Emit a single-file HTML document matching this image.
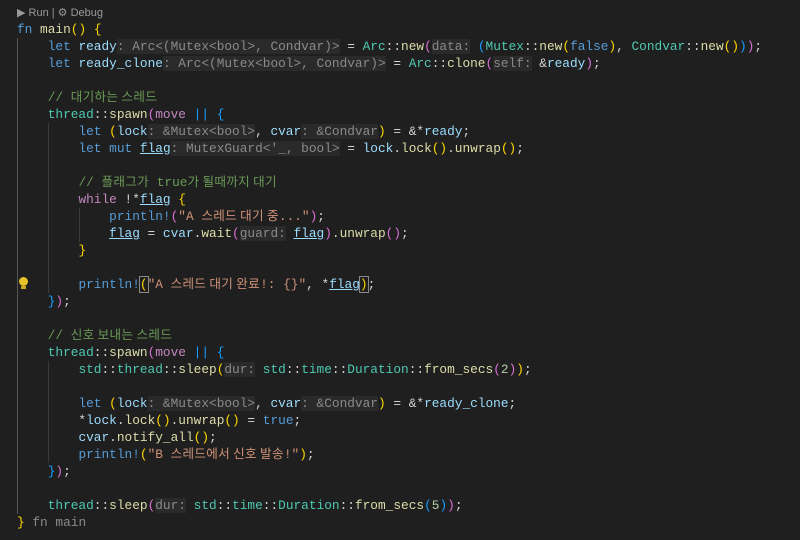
<!DOCTYPE html>
<html><head><meta charset="utf-8"><style>
body{margin:0;background:#1f1f1f;width:800px;height:540px;overflow:hidden;position:relative}
pre{position:absolute;left:17px;top:21px;margin:0;font-family:"Liberation Mono",monospace;font-size:12.8px;line-height:17px;color:#d4d4d4}
.ko{font-family:"Noto Sans CJK KR",sans-serif;font-size:12.6px;letter-spacing:0.3px;line-height:1px}
.k{color:#569cd6}.v{color:#9cdcfe}.t{color:#4ec9b0}.f{color:#dcdcaa}.s{color:#ce9178}.c{color:#6a9955}.p{color:#c586c0}.n{color:#b5cea8}
.h{color:#8a8a8a;background:#2a2a2a}
.y{color:#ffd700}.m{color:#da70d6}.b{color:#179fff}
.u{text-decoration:underline;text-decoration-color:#9cdcfe}
.g{position:absolute;width:1px;background:#3a3a3a}
.run{position:absolute;left:17px;top:6px;font-family:"Liberation Sans",sans-serif;font-size:11px;color:#9a9a9a}
</style></head><body>
<div class="run">▶ Run | ⚙ Debug</div>
<div class="g" style="left:17px;top:38px;height:476px;background:#555"></div>
<div class="g" style="left:48px;top:123px;height:170px"></div>
<div class="g" style="left:79px;top:208px;height:34px"></div>
<div class="g" style="left:48px;top:361px;height:102px"></div>
<div style="position:absolute;left:19px;top:277px;width:9px;height:9px;border-radius:50%;background:#e8c227"></div>
<div style="position:absolute;left:21px;top:286px;width:5px;height:3px;background:#c9a825"></div>
<pre><span class="k">fn</span> <span class="f">main</span><span class="y">()</span> <span class="y">{</span>
    <span class="k">let</span> <span class="v">ready</span><span class="h">: Arc&lt;(Mutex&lt;bool&gt;, Condvar)&gt;</span> = <span class="t">Arc</span>::<span class="f">new</span><span class="m">(</span><span class="h">data:</span> <span class="b">(</span><span class="t">Mutex</span>::<span class="f">new</span><span class="y">(</span><span class="k">false</span><span class="y">)</span>, <span class="t">Condvar</span>::<span class="f">new</span><span class="y">()</span><span class="b">)</span><span class="m">)</span>;
    <span class="k">let</span> <span class="v">ready_clone</span><span class="h">: Arc&lt;(Mutex&lt;bool&gt;, Condvar)&gt;</span> = <span class="t">Arc</span>::<span class="f">clone</span><span class="m">(</span><span class="h">self:</span> &amp;<span class="v">ready</span><span class="m">)</span>;

    <span class="c">// <span class="ko">대기하는 스레드</span></span>
    <span class="t">thread</span>::<span class="f">spawn</span><span class="m">(</span><span class="p">move</span> <span class="b">||</span> <span class="b">{</span>
        <span class="k">let</span> <span class="y">(</span><span class="v">lock</span><span class="h">: &amp;Mutex&lt;bool&gt;</span>, <span class="v">cvar</span><span class="h">: &amp;Condvar</span><span class="y">)</span> = &amp;*<span class="v">ready</span>;
        <span class="k">let</span> <span class="k">mut</span> <span class="v u">flag</span><span class="h">: MutexGuard&lt;'_, bool&gt;</span> = <span class="v">lock</span>.<span class="f">lock</span><span class="y">()</span>.<span class="f">unwrap</span><span class="y">()</span>;

        <span class="c">// <span class="ko">플래그가</span> true<span class="ko">가 될때까지 대기</span></span>
        <span class="p">while</span> !*<span class="v u">flag</span> <span class="y">{</span>
            <span class="k">println!</span><span class="m">(</span><span class="s">"A <span class="ko">스레드 대기 중</span>..."</span><span class="m">)</span>;
            <span class="v u">flag</span> = <span class="v">cvar</span>.<span class="f">wait</span><span class="m">(</span><span class="h">guard:</span> <span class="v u">flag</span><span class="m">)</span>.<span class="f">unwrap</span><span class="m">()</span>;
        <span class="y">}</span>

        <span class="k">println!</span><span class="y" style="outline:1px solid #888">(</span><span class="s">"A <span class="ko">스레드 대기 완료</span>!: {}"</span>, *<span class="v u">flag</span><span class="y" style="outline:1px solid #888">)</span>;
    <span class="b">}</span><span class="m">)</span>;

    <span class="c">// <span class="ko">신호 보내는 스레드</span></span>
    <span class="t">thread</span>::<span class="f">spawn</span><span class="m">(</span><span class="p">move</span> <span class="b">||</span> <span class="b">{</span>
        <span class="t">std</span>::<span class="t">thread</span>::<span class="f">sleep</span><span class="y">(</span><span class="h">dur:</span> <span class="t">std</span>::<span class="t">time</span>::<span class="t">Duration</span>::<span class="f">from_secs</span><span class="m">(</span><span class="n">2</span><span class="m">)</span><span class="y">)</span>;

        <span class="k">let</span> <span class="y">(</span><span class="v">lock</span><span class="h">: &amp;Mutex&lt;bool&gt;</span>, <span class="v">cvar</span><span class="h">: &amp;Condvar</span><span class="y">)</span> = &amp;*<span class="v">ready_clone</span>;
        *<span class="v">lock</span>.<span class="f">lock</span><span class="y">()</span>.<span class="f">unwrap</span><span class="y">()</span> = <span class="k">true</span>;
        <span class="v">cvar</span>.<span class="f">notify_all</span><span class="y">()</span>;
        <span class="k">println!</span><span class="y">(</span><span class="s">"B <span class="ko">스레드에서 신호 발송</span>!"</span><span class="y">)</span>;
    <span class="b">}</span><span class="m">)</span>;

    <span class="t">thread</span>::<span class="f">sleep</span><span class="m">(</span><span class="h">dur:</span> <span class="t">std</span>::<span class="t">time</span>::<span class="t">Duration</span>::<span class="f">from_secs</span><span class="b">(</span><span class="n">5</span><span class="b">)</span><span class="m">)</span>;
<span class="y">}</span> <span style="color:#8a8a8a">fn main</span></pre>
</body></html>
